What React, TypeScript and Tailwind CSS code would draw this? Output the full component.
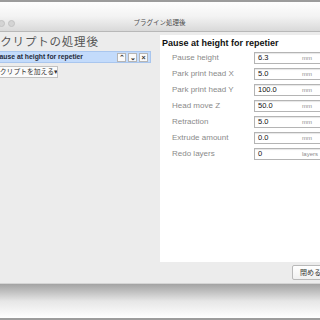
import React from "react";

const rows: { label: string; value: string; unit: string }[] = [
  { label: "Pause height", value: "6.3", unit: "mm" },
  { label: "Park print head X", value: "5.0", unit: "mm" },
  { label: "Park print head Y", value: "100.0", unit: "mm" },
  { label: "Head move Z", value: "50.0", unit: "mm" },
  { label: "Retraction", value: "5.0", unit: "mm" },
  { label: "Extrude amount", value: "0.0", unit: "mm" },
  { label: "Redo layers", value: "0", unit: "layers" },
];

export default function App() {
  return (
    <div
      className="w-[320px] h-[320px] bg-white overflow-hidden flex flex-col"
      style={{ fontFamily: '"Liberation Sans", "Noto Sans CJK JP", sans-serif' }}
    >
      <div className="h-[2px] bg-[#9c9c9c] shrink-0" />
      {/* title bar */}
      <div className="h-[29px] shrink-0 bg-gradient-to-b from-[#fefefe] via-[#f3f3f3] to-[#d9d9d9] flex items-end pb-[4px] relative">
        <div className="flex gap-[3px] -ml-[2px]">
          <div className="w-[7px] h-[7px] rounded-full bg-[#d4d4d4] border border-[#c2c2c2]" />
          <div className="w-[7px] h-[7px] rounded-full bg-[#d4d4d4] border border-[#c2c2c2]" />
        </div>
        <div className="flex-1 text-center text-[6.5px] leading-[8px] text-[#4a4a4a] -ml-[16px]">
          プラグイン処理後
        </div>
      </div>
      <div className="h-px bg-[#b8b8b8] shrink-0" />
      {/* body */}
      <div className="h-[251px] shrink-0 bg-[#ececec] flex flex-col">
        <div className="flex pt-[3px] h-[230px]">
          {/* left pane */}
          <div className="w-[160px] shrink-0 flex flex-col overflow-hidden">
            <div className="text-[11.5px] leading-[14px] text-[#555] whitespace-nowrap -ml-[12px] tracking-[0.8px]">
              スクリプトの処理後
            </div>
            <div className="mt-[2px] w-[151px] h-[12px] bg-[#c3dbfb] border border-[#a9c6ee] border-l-0 flex items-center">
              <span className="flex-1 text-[6.8px] leading-[10px] font-bold text-[#1f2a3a] whitespace-nowrap -ml-[5px]">
                Pause at height for repetier
              </span>
              <div className="flex gap-[2px] pr-[2px]">
                {["⌃", "⌄", "×"].map((c, i) => (
                  <div
                    key={i}
                    className="w-[9px] h-[9px] bg-[#fafafa] border border-[#b5b5b5] flex items-center justify-center text-[7px] leading-[7px] text-[#333] font-bold"
                  >
                    {c}
                  </div>
                ))}
              </div>
            </div>
            <div className="mt-[3px] w-[58px] h-[12px] bg-[#fbfbfb] border border-[#c2c2c2] border-l-0 flex items-center overflow-hidden">
              <span className="text-[6.8px] leading-[10px] text-[#333] whitespace-nowrap -ml-[7px]">
                スクリプトを加える▾
              </span>
            </div>
          </div>
          {/* right panel */}
          <div className="flex-1 min-w-0 bg-white flex flex-col overflow-hidden">
            <div className="pl-[2px] h-[15px] pt-[1px] text-[9px] leading-[14px] font-bold text-[#111] whitespace-nowrap">
              Pause at height for repetier
            </div>
            {rows.map((r) => (
              <div key={r.label} className="h-[16px] flex items-center">
                <div className="w-[94px] shrink-0 pl-[12px] text-[8px] leading-[10px] text-[#8a8a8a] whitespace-nowrap">
                  {r.label}
                </div>
                <div className="w-[80px] h-[12px] shrink-0 border border-[#b4b4b4] shadow-[inset_0_1px_1px_rgba(0,0,0,0.1)] flex items-center pl-[3px]">
                  <span className="w-[44px] shrink-0 text-[7.5px] leading-[10px] text-[#111]">{r.value}</span>
                  <span className="text-[6px] leading-[10px] text-[#8c8c8c]">{r.unit}</span>
                </div>
              </div>
            ))}
          </div>
        </div>
        {/* bottom bar */}
        <div className="h-[21px] flex items-center justify-end">
          <div className="w-[34px] h-[15px] -mr-[6px] bg-gradient-to-b from-[#ffffff] to-[#f0f0f0] border border-[#b9b9b9] rounded-[2px] flex items-center pl-[7px]">
            <span className="text-[7px] leading-[10px] text-[#333] whitespace-nowrap">閉める</span>
          </div>
        </div>
      </div>
      <div className="h-px bg-[#d4d4d4] shrink-0" />
      <div className="h-[34px] shrink-0 bg-gradient-to-b from-[#a3a3a3] via-[#e6e6e6] to-[#ffffff]" />
      <div className="flex-1 bg-white" />
      <div className="h-[2px] bg-[#9c9c9c] shrink-0" />
    </div>
  );
}
